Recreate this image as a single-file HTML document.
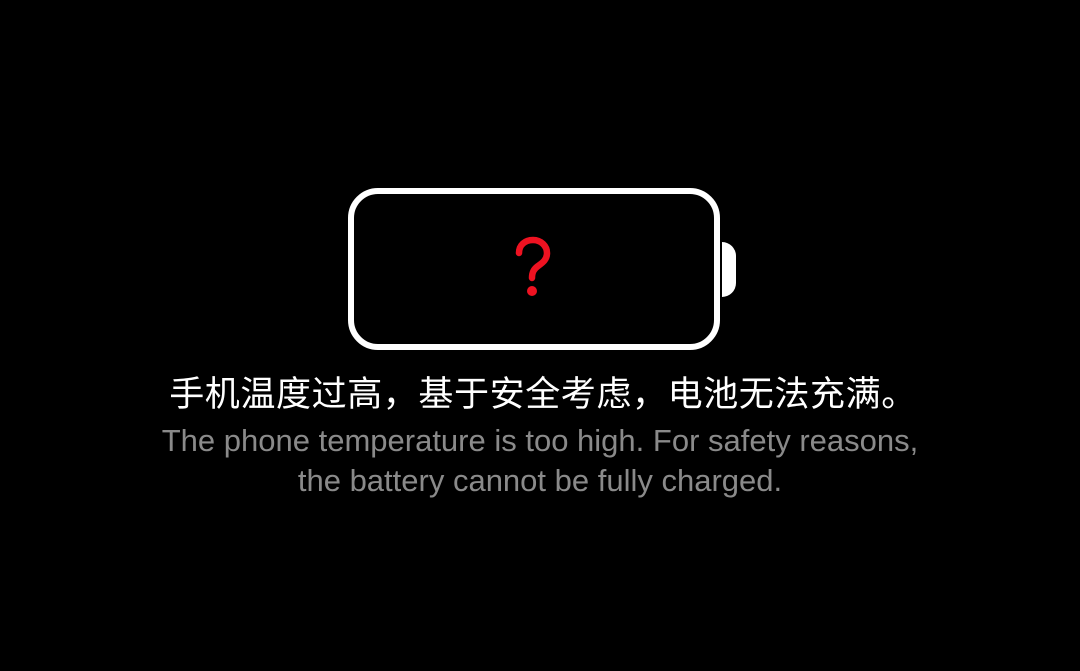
<!DOCTYPE html>
<html><head><meta charset="utf-8"><style>
html,body{margin:0;padding:0;background:#000;width:1080px;height:671px;overflow:hidden}
.cn{position:absolute;left:0;width:1086px;top:372px;text-align:center;color:#fff;font:400 35px/46px "Liberation Sans","Noto Sans CJK SC",sans-serif;letter-spacing:0.6px;white-space:nowrap}
.en{position:absolute;left:0;width:1080px;top:421px;text-align:center;color:#8a8a8a;font:31px/40px "Liberation Sans",sans-serif;white-space:nowrap}
</style></head><body>
<svg width="1080" height="671" style="position:absolute;left:0;top:0">
<rect x="351" y="191" width="366" height="156" rx="27" fill="none" stroke="#fff" stroke-width="6"/>
<path d="M722 242 A14 14 0 0 1 736 256 L736 283 A14 14 0 0 1 722 297 Z" fill="#fff"/>
<path d="M519 253 C519 245 525 240 533 240 C541 240 547 246 547 253 C547 260 542 263 538 266 C534 269 532 272 532 278" fill="none" stroke="#ee1221" stroke-width="6.5" stroke-linecap="round"/>
<circle cx="532" cy="291" r="5" fill="#ee1221"/>
</svg>
<div class="cn">手机温度过高，基于安全考虑，电池无法充满。</div>
<div class="en">The phone temperature is too high. For safety reasons,<br>the battery cannot be fully charged.</div>
</body></html>
